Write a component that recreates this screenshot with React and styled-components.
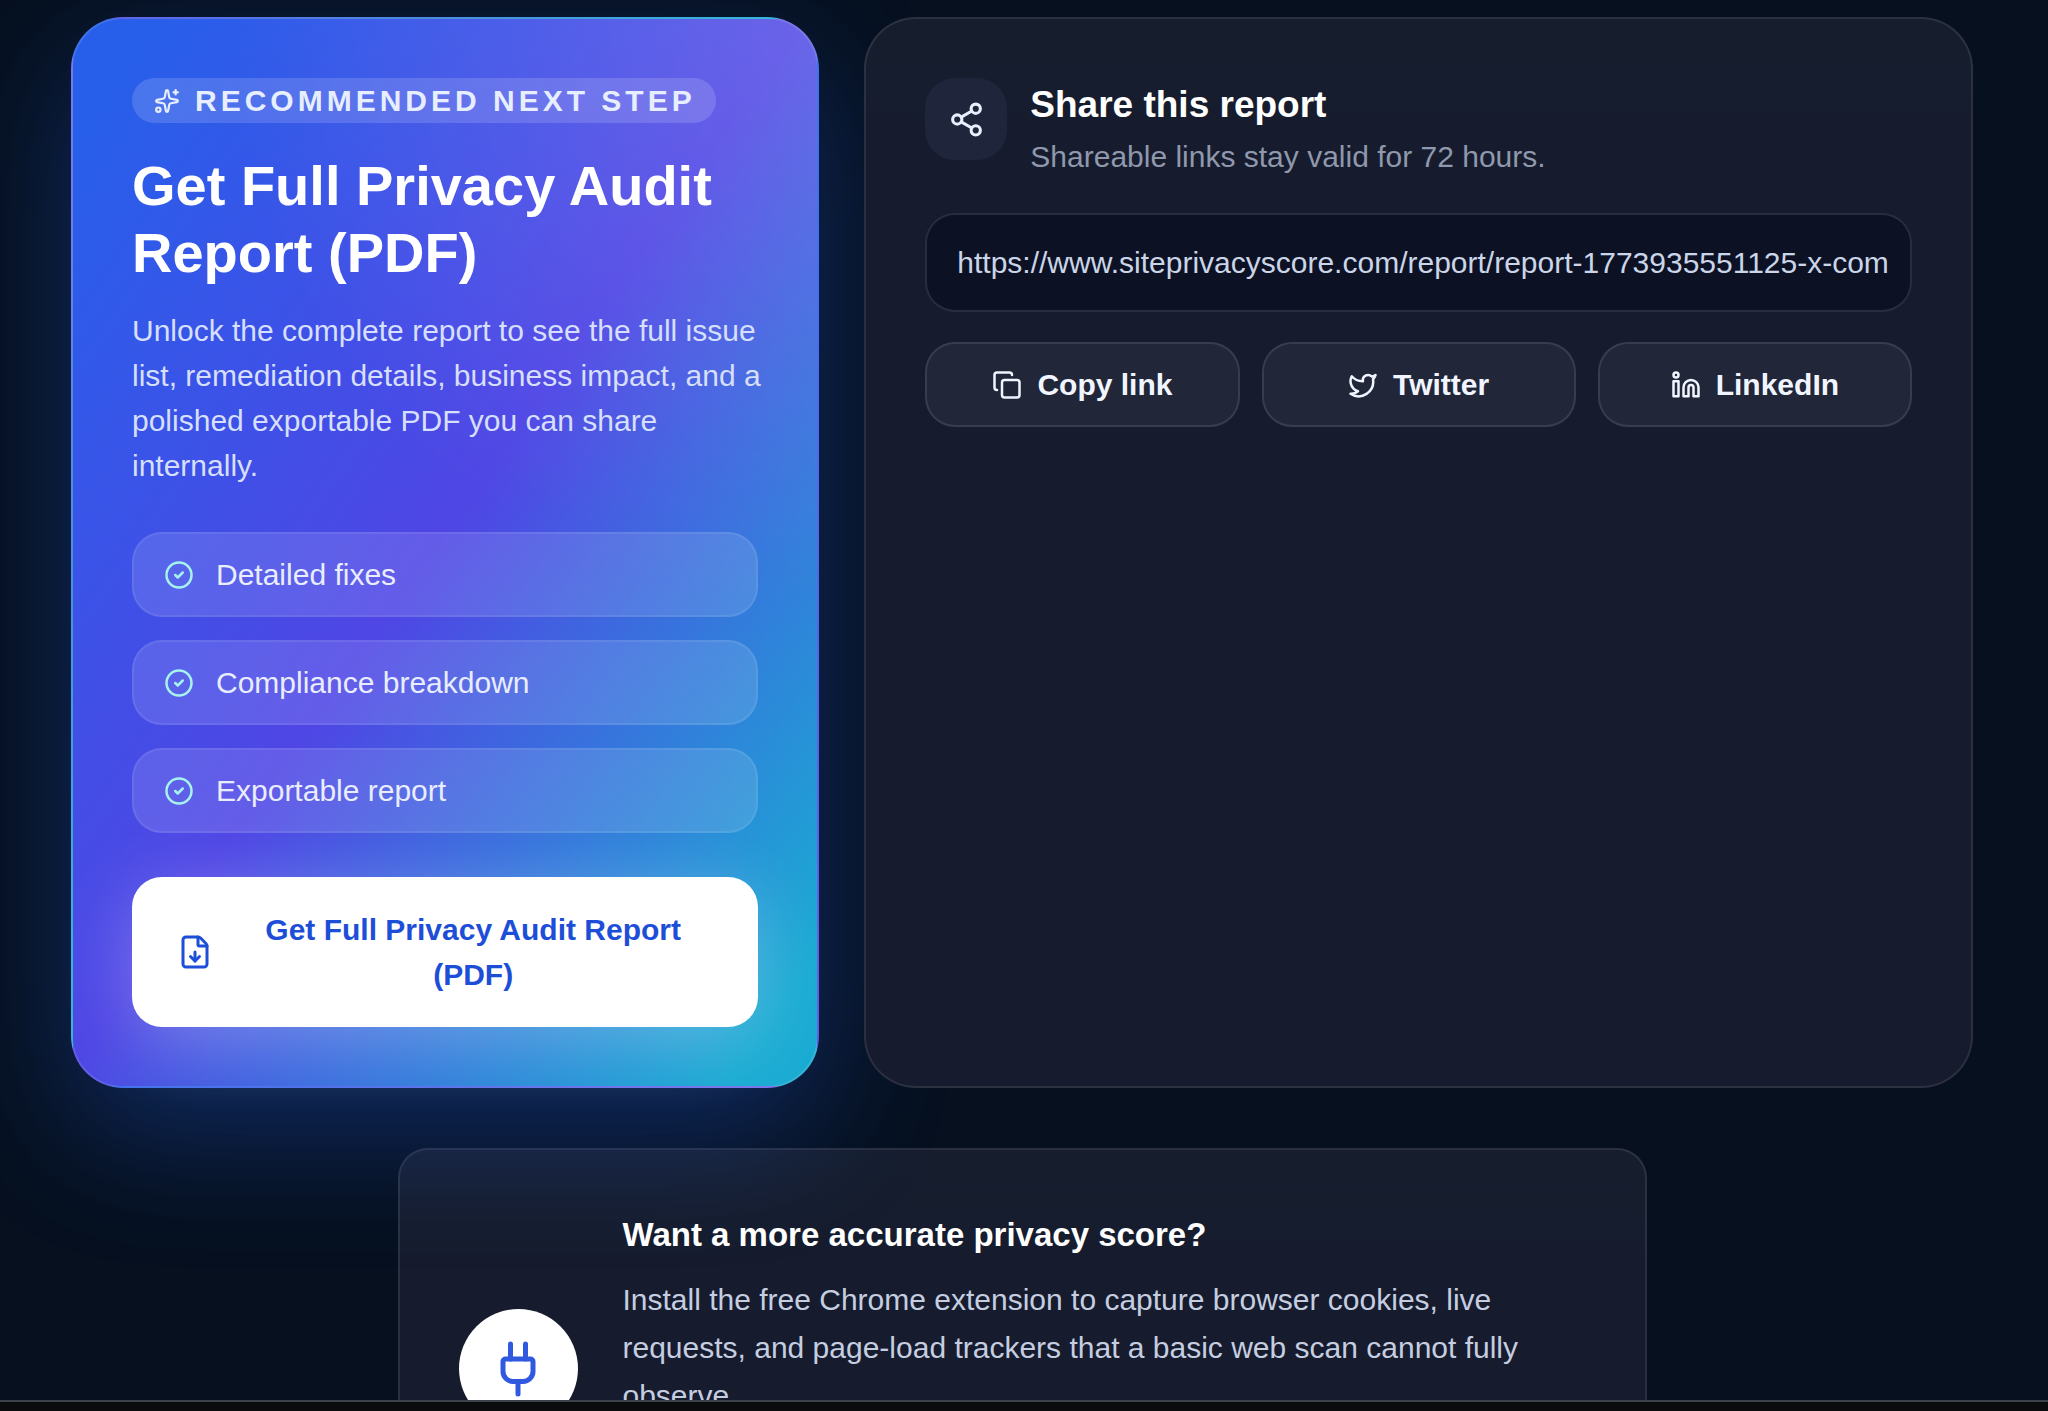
import React from 'react';
import styled, { createGlobalStyle } from 'styled-components';
import {
  CircleCheck,
  Copy,
  FileDown,
  Linkedin,
  Plug,
  Share2,
  Sparkles,
  Twitter,
} from 'lucide-react';

const REPORT_URL =
  'https://www.siteprivacyscore.com/report/report-1773935551125-x-com';

const features = ['Detailed fixes', 'Compliance breakdown', 'Exportable report'];

const shareTargets = [
  { label: 'Copy link', icon: Copy },
  { label: 'Twitter', icon: Twitter },
  { label: 'LinkedIn', icon: Linkedin },
];

const AuditCard = () => (
  <HeroCard>
    <Badge>
      <Sparkles size={26} />
      Recommended next step
    </Badge>
    <HeroTitle>Get Full Privacy Audit Report (PDF)</HeroTitle>
    <HeroText>
      Unlock the complete report to see the full issue list, remediation
      details, business impact, and a polished exportable PDF you can share
      internally.
    </HeroText>
    <FeatureList>
      {features.map((feature) => (
        <Feature key={feature}>
          <CircleCheck size={30} />
          {feature}
        </Feature>
      ))}
    </FeatureList>
    <DownloadButton type="button">
      <FileDown size={36} />
      <span>Get Full Privacy Audit Report (PDF)</span>
    </DownloadButton>
  </HeroCard>
);

const ShareCard = () => (
  <GlassCard>
    <ShareHeader>
      <IconTile>
        <Share2 size={37} />
      </IconTile>
      <div>
        <ShareTitle>Share this report</ShareTitle>
        <ShareHint>Shareable links stay valid for 72 hours.</ShareHint>
      </div>
    </ShareHeader>
    <UrlField
      type="text"
      aria-label="Report link"
      value={REPORT_URL}
      readOnly
    />
    <ShareActions>
      {shareTargets.map(({ label, icon: Icon }) => (
        <ShareButton key={label} type="button">
          <Icon size={30} />
          {label}
        </ShareButton>
      ))}
    </ShareActions>
  </GlassCard>
);

const ExtensionCard = () => (
  <ExtensionPanel>
    <PlugCircle>
      <Plug size={60} />
    </PlugCircle>
    <ExtensionBody>
      <ExtensionTitle>Want a more accurate privacy score?</ExtensionTitle>
      <ExtensionText>
        Install the free Chrome extension to capture browser cookies, live
        requests, and page-load trackers that a basic web scan cannot fully
        observe.
      </ExtensionText>
    </ExtensionBody>
  </ExtensionPanel>
);

const App = () => {
  return (
    <Shell>
      <GlobalStyle />
      <Content>
        <CardGrid>
          <AuditCard />
          <ShareCard />
        </CardGrid>
        <ExtensionCard />
      </Content>
      <BottomEdge />
    </Shell>
  );
};

const GlobalStyle = createGlobalStyle`
  *, *::before, *::after {
    box-sizing: border-box;
  }

  body {
    margin: 0;
    background: #06101f;
    color: #fff;
    font-family: "Liberation Sans", Arial, sans-serif;
    font-size: 30px;
    line-height: 45px;
  }

  h2, h3, p, ul {
    margin: 0;
    padding: 0;
  }

  button, input {
    font: inherit;
  }

  svg {
    flex-shrink: 0;
  }
`;

const Shell = styled.div`
  display: flex;
  flex-direction: column;
  height: 100vh;
`;

const Content = styled.main`
  flex: 1;
  min-height: 0;
  overflow: hidden;
  padding: 17px 75px 0 71px;
  background: #06101f;
`;

const BottomEdge = styled.footer`
  height: 11px;
  border-top: 2px solid #3d434c;
  background: #0b0c0e;
`;

const CardGrid = styled.div`
  display: grid;
  grid-template-columns: 27fr 40fr;
  gap: 45px;
`;

const HeroCard = styled.section`
  display: flex;
  flex-direction: column;
  align-items: flex-start;
  padding: 59px;
  border: 2px solid rgba(255, 255, 255, 0.12);
  border-radius: 52px;
  background:
    radial-gradient(circle at top right, rgba(255, 255, 255, 0.16), transparent 45%),
    linear-gradient(to bottom right, #285fea 6%, #4f46e5 49%, #1aabd3 94%);
  box-shadow: 0 45px 130px rgba(37, 99, 235, 0.32);
`;

const Badge = styled.span`
  display: inline-flex;
  align-items: center;
  gap: 15px;
  padding: 0 20px 0 22px;
  border-radius: 23px;
  background: rgba(255, 255, 255, 0.15);
  color: #e6eeff;
  font-weight: 700;
  letter-spacing: 4px;
  text-transform: uppercase;
`;

const HeroTitle = styled.h2`
  margin-top: 29px;
  font-size: 56px;
  line-height: 67px;
`;

/* runs slightly into the card padding */
const HeroText = styled.p`
  margin: 22px -10px 0 0;
  color: #d6dffc;
`;

const FeatureList = styled.ul`
  display: grid;
  gap: 23px;
  width: 100%;
  margin-top: 44px;
  list-style: none;
`;

const Feature = styled.li`
  display: flex;
  align-items: center;
  gap: 22px;
  padding: 18px 30px;
  border: 2px solid rgba(255, 255, 255, 0.08);
  border-radius: 30px;
  background: rgba(255, 255, 255, 0.12);
  color: #e8edff;

  svg {
    color: #a5f3ec;
  }
`;

const DownloadButton = styled.button`
  display: flex;
  align-items: center;
  gap: 20px;
  width: 100%;
  margin-top: 44px;
  padding: 30px 45px;
  border: none;
  border-radius: 30px;
  background: #fff;
  box-shadow: 0 15px 75px rgba(255, 255, 255, 0.27);
  color: #1d4ed8;
  font-weight: 700;
  cursor: pointer;

  span {
    flex: 1;
  }
`;

const GlassCard = styled.section`
  padding: 59px;
  border: 2px solid rgba(255, 255, 255, 0.09);
  border-radius: 52px;
  background: linear-gradient(#161e2e, #161b2d 180px);
`;

const ShareHeader = styled.header`
  display: flex;
  align-items: flex-start;
  gap: 23px;
`;

const IconTile = styled.div`
  display: grid;
  place-items: center;
  width: 82px;
  height: 82px;
  border-radius: 30px;
  background: #1f253a;
  color: #e8efff;
`;

const ShareTitle = styled.h2`
  font-size: 37px;
  line-height: 54px;
`;

const ShareHint = styled.p`
  margin-top: 2px;
  color: #8f98ac;
`;

const UrlField = styled.input`
  display: block;
  width: 100%;
  height: 99px;
  margin-top: 34px;
  padding: 0 22px 0 30px;
  border: 2px solid rgba(255, 255, 255, 0.08);
  border-radius: 30px;
  outline: none;
  background: #0c1224;
  background-clip: padding-box;
  color: #cbd5e8;
`;

const ShareActions = styled.div`
  display: grid;
  grid-template-columns: repeat(3, 1fr);
  gap: 22px;
  margin-top: 30px;
`;

const ShareButton = styled.button`
  display: flex;
  align-items: center;
  justify-content: center;
  gap: 15px;
  padding: 18px 30px;
  border: 2px solid rgba(255, 255, 255, 0.1);
  border-radius: 30px;
  background: #222639;
  color: #f1f5ff;
  font-weight: 700;
  cursor: pointer;
`;

const ExtensionPanel = styled.section`
  display: flex;
  align-items: center;
  gap: 45px;
  max-width: 1249px;
  min-height: 441px;
  margin: 60px auto 0;
  padding: 59px;
  border: 2px solid rgba(255, 255, 255, 0.09);
  border-radius: 30px;
  background: linear-gradient(#161e2e, #161b2d 180px);
`;

const PlugCircle = styled.div`
  display: grid;
  place-items: center;
  flex-shrink: 0;
  width: 119px;
  height: 119px;
  border-radius: 50%;
  background: #fff;
  color: #3159df;
`;

const ExtensionBody = styled.div`
  align-self: flex-start;
`;

const ExtensionTitle = styled.h3`
  font-size: 33px;
  line-height: 52px;
`;

const ExtensionText = styled.p`
  margin-top: 15px;
  color: #c5cee0;
  line-height: 48px;
`;

export default App;
